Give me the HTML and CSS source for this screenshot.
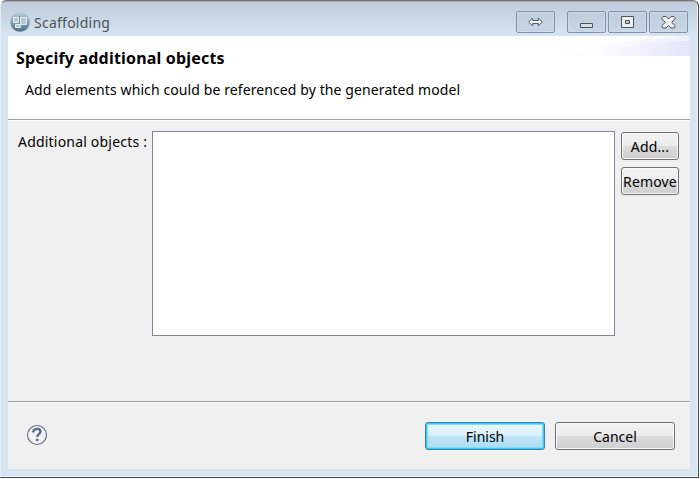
FILE: index.html
```html
<!DOCTYPE html>
<html lang="en">
<head>
<meta charset="utf-8">
<title>Scaffolding</title>
<link rel="stylesheet" href="styles.css">
</head>
<body>
<div class="window">
  <header class="titlebar">
    <svg class="app-icon" width="20" height="20" viewBox="0 0 20 20">
      <defs><linearGradient id="orb" x1="0" y1="0" x2="0" y2="1"><stop offset="0" stop-color="#b9cad5"/><stop offset=".5" stop-color="#86a3b4"/><stop offset="1" stop-color="#456f87"/></linearGradient></defs>
      <circle cx="10" cy="10" r="9.800" fill="url(#orb)"/>
      <path d="M3.500 5.500h5v5h-5zM10.500 5.500h6v7h-6zM5.500 12.500h5v3h-5z" fill="#b3c9d5" stroke="#e3edf2"/>
      <path d="M9.500 4v8" fill="none" stroke="#7392a4"/>
    </svg>
    <h1 class="title">Scaffolding</h1>
    <div class="controls">
      <button class="control resize" aria-label="Resize"><svg width="15" height="10" viewBox="0 0 15 10"><path d="M.7 5l4-4v2.500h5.600V1l4 4-4 4V6.500H4.700V9z" fill="#f6f6f6" stroke="#505b70"/></svg></button>
      <button class="control" aria-label="Minimize"><svg width="15" height="15" viewBox="0 0 15 15"><path d="M1.500 8.500h12v4h-12z" fill="#dededa" stroke="#4b5263"/></svg></button>
      <button class="control" aria-label="Maximize"><svg width="13" height="12" viewBox="0 0 13 12"><path d="M.5.500h12v11H.5z" fill="#eeeeec" stroke="#4b5263"/><path d="M4.500 4.500h4v3h-4z" fill="#b9c6d6" stroke="#4b5263"/></svg></button>
      <button class="control" aria-label="Close"><svg width="15" height="13" viewBox="0 0 15 13"><path d="M1 1.500L2 .5h3L7.500 3 10 .5h3l1 1v1.700L10.700 6.300 14 9.500v1.500l-1 1h-3L7.500 9.500 5 12H2l-1-1V9.500l3.300-3.200L1 3.200z" fill="#eeeeec" stroke="#4b5263"/></svg></button>
    </div>
  </header>
  <main class="client">
    <section class="banner">
      <svg class="swoosh" width="136" height="20" viewBox="0 0 136 20">
        <defs><linearGradient id="sweep"><stop offset="0" stop-color="#fff"/><stop offset=".4" stop-color="#f9faff"/><stop offset="1" stop-color="#dfe5f8"/></linearGradient></defs>
        <path d="M0 20C42 10 83 2 136 0v20z" fill="url(#sweep)" opacity=".6"/>
        <path d="M0 20C45 12 90 6 136 5v15z" fill="url(#sweep)" opacity=".8"/>
      </svg>
      <h2 class="heading">Specify additional objects</h2>
      <p class="description">Add elements which could be referenced by the generated model</p>
    </section>
    <section class="content">
      <label class="label">Additional objects :</label>
      <div class="list"></div>
      <div class="actions">
        <button class="button small"><span>Add...</span></button>
        <button class="button small"><span>Remove</span></button>
      </div>
    </section>
    <footer class="footer">
      <svg class="help" width="22" height="22" viewBox="0 0 22 22"><circle cx="11" cy="11" r="9.500" fill="#f2f2f3" stroke="#5b6c8b" stroke-width="1.100"/><path d="M7.300 8.400V7.300C8 5.500 9.300 4.900 11.200 4.900c2.100 0 3.300 1 3.300 2.700 0 2.500-3 2.500-3.300 5.200" fill="none" stroke="#54698c" stroke-width="2.300"/><path d="M9.900 14.800h2.600v2.300H9.900z" fill="#54698c"/></svg>
      <button class="button wide primary"><span>Finish</span></button>
      <button class="button wide"><span>Cancel</span></button>
    </footer>
  </main>
</div>
</body>
</html>
```

FILE: styles.css
```css
* { box-sizing: border-box; }
body {
  margin: 0;
  overflow: hidden;
  background: #fff;
  color: #000;
  font: 14px/20px "Noto Sans", "Open Sans", sans-serif;
}
.window {
  width: 699px;
  height: 478px;
  padding: 0 8px 8px 7px;
  border: 1px solid #45474b;
  border-top-color: #777;
  border-left-color: #e5edf5;
  border-radius: 6px 6px 0 0;
  background: linear-gradient(#bdccdb, #d7e4f1 35px);
  box-shadow: inset 0 1px #b0aaae, inset -1px -1px #eef5fb;
}
.titlebar { display: flex; height: 35px; align-items: flex-start; }
.app-icon { margin: 11px 0 0 2px; }
.title { margin: 12px 0 0 4px; color: #4e5459; font-size: 14px; font-weight: 400; letter-spacing: .25px; }
.controls { display: flex; gap: 2px; margin: 10px 2px 0 auto; }
.control {
  display: flex;
  width: 39px;
  height: 22px;
  padding: 0;
  align-items: center;
  justify-content: center;
  border: 1px solid #8392ab;
  border-radius: 2px;
  background: linear-gradient(#becddd, #c8d6e4);
  box-shadow: inset 0 0 0 1px #cedae6;
}
.resize { margin-right: 10px; }
.client { height: 433px; background: #f0f0f0; }
.banner { position: relative; height: 84px; padding-top: 12px; border-bottom: 1px solid #a0a0a0; background: #fff; }
.swoosh { position: absolute; top: 0; right: 0; }
.heading { position: relative; margin: 0 0 0 8px; font-size: 16px; line-height: 20px; letter-spacing: .19px; }
.description { margin: 12px 0 0 17px; letter-spacing: .1px; }
.content { display: flex; height: 281px; padding: 11px 11px 0 10px; border-top: 1px solid #fff; }
.label { width: 134px; letter-spacing: .2px; white-space: nowrap; }
.list { width: 463px; height: 205px; margin-top: -1px; border: 1px solid #828790; background: #fff; }
.actions { display: flex; flex-direction: column; gap: 7px; margin-left: 6px; }
.button {
  display: flex;
  height: 28px;
  padding: 1px 0 0;
  align-items: center;
  justify-content: center;
  border: 1px solid #707070;
  border-radius: 3px;
  background: linear-gradient(#f2f2f2 0 1px, #ececec 48%, #dddddd 49%, #cfcfcf);
  box-shadow: inset 0 0 0 1px #fbfbfb;
  color: #000;
  font: inherit;
  white-space: nowrap;
}
.small { width: 58px; letter-spacing: .15px; }
.wide { width: 120px; }
.primary {
  border-color: #3c7fb1;
  background: linear-gradient(#eaf6fd, #d9f0fc 48%, #c0e5f8 49%, #addcf4);
  box-shadow: inset 0 0 0 1px #35cdf8, inset 0 0 0 2px #7fdffa;
}
.footer { display: flex; height: 68px; padding: 20px 15px 0 18px; gap: 10px; border-top: 1px solid #a0a0a0; box-shadow: inset 0 1px #fff; }
.help { margin: 2px auto 0 0; }
```
